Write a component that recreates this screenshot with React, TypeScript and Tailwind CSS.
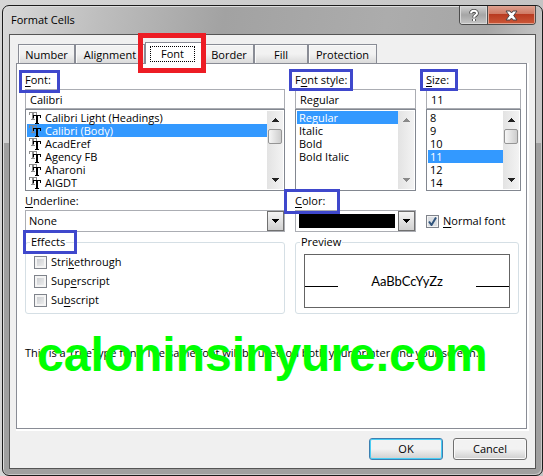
import type { ReactNode } from 'react';

const fonts = ['Calibri Light (Headings)', 'Calibri (Body)', 'AcadEref', 'Agency FB', 'Aharoni', 'AIGDT'];
const styles = ['Regular', 'Italic', 'Bold', 'Bold Italic'];
const sizes = ['8', '9', '10', '11', '12', '14'];

const tabs = [
  { name: 'Number', width: 'w-[57px]' },
  { name: 'Alignment', width: 'w-[70px]' },
  { name: 'Font', width: 'w-[59px]' },
  { name: 'Border', width: 'w-[50px]' },
  { name: 'Fill', width: 'w-[54px]' },
  { name: 'Protection', width: 'w-[69px]' },
];

const effects = [
  { id: 'strike', before: 'Stri', key: 'k', after: 'ethrough' },
  { id: 'super', before: 'Sup', key: 'e', after: 'rscript' },
  { id: 'sub', before: 'Su', key: 'b', after: 'script' },
];

function Mark({ className }: { className: string }) {
  return <span aria-hidden="true" className={`pointer-events-none absolute z-10 border-[3px] border-[#3f48cc] ${className}`} />;
}

function Key({ children }: { children: ReactNode }) {
  return <span className="underline underline-offset-2">{children}</span>;
}

function TrueTypeIcon({ selected }: { selected: boolean }) {
  return (
    <svg width="12" height="12" viewBox="0 0 12 12" shapeRendering="crispEdges" className="shrink-0">
      <path
        d="M0 0h8v3h-1v-2h-2v6h1v1h-4v-1h1v-6h-2v2h-1z"
        fill={selected ? '#7d8796' : '#8c8c8c'}
      />
      <path d="M4 3h8v3h-1v-2h-2v7h1v1h-4v-1h1v-7h-2v2h-1z" fill="#000" />
    </svg>
  );
}

function Arrow({ up, color }: { up?: boolean; color: string }) {
  return (
    <svg width="7" height="4" viewBox="0 0 7 4" shapeRendering="crispEdges">
      <path d={up ? 'M3 0h1v1h1v1h1v1h1v1H0V3h1V2h1V1h1z' : 'M0 0h7v1H6v1H5v1H4v1H3V3H2V2H1V1H0z'} fill={color} />
    </svg>
  );
}

function ScrollBar({ disabled }: { disabled?: boolean }) {
  const color = disabled ? '#8a8a8a' : '#222222';
  return (
    <div className="flex w-4 shrink-0 flex-col items-center bg-gradient-to-r from-[#e3e3e3] to-[#f3f3f3] py-[7px]">
      <Arrow up color={color} />
      {!disabled && (
        <div className="mt-[7px] h-[15px] w-[14px] rounded-[2px] border border-[#959595] bg-gradient-to-r from-[#f6f6f6] to-[#cdcdcd]" />
      )}
      <div className="grow" />
      <Arrow color={color} />
    </div>
  );
}

interface ListProps {
  label: string;
  items: string[];
  selected: string;
  icons?: boolean;
  disabled?: boolean;
}

function List({ label, items, selected, icons, disabled }: ListProps) {
  return (
    <div className="flex h-[82px] border border-[#828790] bg-white p-px">
      <ul role="listbox" aria-label={label} className="min-w-0 grow">
        {items.map((item) => (
          <li
            key={item}
            role="option"
            aria-selected={item === selected}
            className={`flex h-[13px] items-center gap-1 whitespace-nowrap px-[2px] leading-[13px] ${
              item === selected ? 'bg-[#3399ff] text-white' : ''
            }`}
          >
            {icons && <TrueTypeIcon selected={item === selected} />}
            {item}
          </li>
        ))}
      </ul>
      <ScrollBar disabled={disabled} />
    </div>
  );
}

function DropButton() {
  return (
    <span className="pointer-events-none flex w-[17px] shrink-0 items-center justify-center border border-[#707070] bg-gradient-to-b from-[#f4f4f4] to-[#d0d0d0]">
      <Arrow color="#000000" />
    </span>
  );
}

export default function App() {
  const field = 'block h-5 w-full border border-[#abadb3] bg-white px-1 outline-none';
  const label = 'relative block h-[17px]';

  return (
    <div className="bg-[linear-gradient(90deg,#d6d6d6,#c4c4c4)] pl-[2px] pt-[5px] font-['Open_Sans','Noto_Sans',sans-serif] text-[11px] leading-4 text-black">
      <div className="rounded-[7px] border border-[#1c1c1c] bg-[linear-gradient(180deg,transparent_137px,#a0a0a0_137px),linear-gradient(100deg,#d8d8d8_0px,#bdbdbd_100px,#a2a2a2_220px,#acacac_380px,#a6a6a6_480px,#c6c6c6_540px)] px-[6px] pb-[6px] shadow-[inset_1px_1px_0_#dddddd,inset_-1px_-1px_0_#c8c8c8]">
        <header className="flex h-7 items-start justify-between pl-[2px]">
          <h1 className="pt-[6px] leading-4">Format Cells</h1>
          <div className="flex h-[19px] overflow-hidden rounded-b-[4px] border border-t-0 border-[#4d4d4d]">
            <button aria-label="Help" className="flex w-7 items-center justify-center border-r border-[#4d4d4d] bg-gradient-to-b from-[#d2d2d2] via-[#a5a5a5] to-[#c5c5c5] shadow-[inset_0_0_0_1px_#d9d9d9]">
              <svg width="10" height="13" viewBox="0 0 10 13" fill="none">
                <path d="M2 4.5C2 1 8 1 8 4.2C8 6.2 5 6.2 5 8.6M5 10v2" stroke="#444" strokeWidth="3.6" />
                <path d="M2 4.3C2 1 8 1 8 4.2C8 6.2 5 6.2 5 8.4M5 10v2" stroke="#fff" strokeWidth="2" />
              </svg>
            </button>
            <button aria-label="Close" className="flex w-[47px] items-center justify-center bg-[linear-gradient(#dda08f_0%,#cf7963_45%,#b83a20_46%,#cc5838_100%)] shadow-[inset_0_0_0_1px_#e0a18e]">
              <svg width="13" height="11" viewBox="0 0 13 11">
                <path d="M1 1h4l1.500 2L8 1h4L8.700 5.500L12 10H8L6.500 8L5 10H1l3.300-4.500z" fill="#fff" stroke="#4a4446" />
              </svg>
            </button>
          </div>
        </header>

        <main className="border border-[#555555] bg-[#f0f0f0] pb-2 pl-[6px] pr-2 pt-[7px]">
          <div role="tablist" className="flex h-[21px] items-end pl-[2px]">
            {tabs.map(({ name, width }) =>
              name === 'Font' ? (
                <button key={name} role="tab" aria-selected="true" className={`relative z-10 -mb-px flex h-[22px] items-center justify-center border border-b-0 border-[#898c95] bg-white pb-[2px] pl-1 pr-2 pt-[3px] ${width}`}>
                  <span className="flex h-4 w-full items-center justify-center border border-dotted border-black">{name}</span>
                  <span aria-hidden="true" className="pointer-events-none absolute -left-[8px] -right-[3px] -top-[10px] h-10 border-[5px] border-[#ed1c24]" />
                </button>
              ) : (
                <button key={name} role="tab" aria-selected="false" className={`flex h-[19px] items-center justify-center border border-b-0 border-[#898c95] bg-gradient-to-b from-[#f2f2f2] from-50% to-[#dadada] pt-[2px] shadow-[inset_1px_1px_0_#fafafa] ${width}`}>
                  {name}
                </button>
              ),
            )}
          </div>

          <section className="relative flex h-[366px] flex-col border border-[#898c95] bg-white pl-2 pr-[5px] pt-2 shadow-[1px_1px_0_1px_#ffffff]">
            <div className="grid grid-cols-[260fr_121fr_95fr] gap-x-[10px]">
              <div>
                <label htmlFor="font" className={label}>
                  <Mark className="-left-[6px] -top-[2px] h-[23px] w-[41px]" />
                  <Key>F</Key>ont:
                </label>
                <input id="font" defaultValue="Calibri" className={field} />
                <List label="Fonts" items={fonts} selected="Calibri (Body)" icons />
              </div>
              <div>
                <label htmlFor="style" className={label}>
                  <Mark className="-left-[6px] -top-[3px] h-[22px] w-16" />
                  F<Key>o</Key>nt style:
                </label>
                <input id="style" defaultValue="Regular" className={field} />
                <List label="Font styles" items={styles} selected="Regular" disabled />
              </div>
              <div>
                <label htmlFor="size" className={label}>
                  <Mark className="-left-[6px] -top-[3px] h-[22px] w-[38px]" />
                  <Key>S</Key>ize:
                </label>
                <input id="size" defaultValue="11" className={field} />
                <List label="Sizes" items={sizes} selected="11" />
              </div>

              <div className="pt-[2px]">
                <label htmlFor="underline" className={label}>
                  <Key>U</Key>nderline:
                </label>
                <div className="flex h-[22px] border border-[#abadb3]">
                  <select id="underline" className="min-w-0 grow appearance-none px-[3px] outline-none">
                    <option>None</option>
                  </select>
                  <DropButton />
                </div>
              </div>
              <div className="pt-[2px]">
                <label htmlFor="color" className={label}>
                  <Mark className="-left-[11px] -top-[4px] h-[25px] w-14" />
                  <Key>C</Key>olor:
                </label>
                <div className="flex h-[22px] border border-[#abadb3]">
                  <button id="color" className="m-[3px] grow bg-black" />
                  <DropButton />
                </div>
              </div>
              <label className="flex items-center gap-1 self-end whitespace-nowrap pb-[3px]">
                <span className="relative flex">
                  <input type="checkbox" defaultChecked className="size-[13px] appearance-none border border-[#7f838b] bg-[#dcdfe3] shadow-[inset_0_0_0_1px_#f4f4f4]" />
                  <svg width="9" height="9" viewBox="0 0 9 9" className="pointer-events-none absolute left-[2px] top-[2px]">
                    <path d="M1 4.500L3.500 8L8 0.500" fill="none" stroke="#31547c" strokeWidth="2" />
                  </svg>
                </span>
                <span><Key>N</Key>ormal font</span>
              </label>
            </div>

            <div className="mt-[2px] grid grid-cols-[260fr_224fr] gap-x-[10px] pr-[2px]">
              <fieldset className="relative h-20 rounded-[3px] border border-[#d5dfe5] px-2">
                <legend className="relative ml-[-4px] px-px">
                  <Mark className="-left-[7px] -top-1 h-6 w-[54px]" />
                  Effects
                </legend>
                <div className="flex flex-col gap-[3px] pt-1">
                  {effects.map(({ id, before, key, after }) => (
                    <label key={id} className="flex h-4 items-center gap-1">
                      <input type="checkbox" className="size-[13px] appearance-none border border-[#7f838b] bg-gradient-to-br from-[#c4c7cb] to-[#f4f4f4] shadow-[inset_0_0_0_2px_#f4f4f4]" />
                      <span>{before}<Key>{key}</Key>{after}</span>
                    </label>
                  ))}
                </div>
              </fieldset>
              <fieldset className="h-20 rounded-[3px] border border-[#d5dfe5] px-2">
                <legend className="ml-[-4px] px-px">Preview</legend>
                <div className="mt-1 flex h-[54px] items-center justify-between border border-[#646464] font-['Lato','Open_Sans',sans-serif] text-[13px]">
                  <span className="mt-[10px] h-px w-[33px] bg-black" />
                  <span>AaBbCcYyZz</span>
                  <span className="mt-[10px] h-px w-[33px] bg-black" />
                </div>
              </fieldset>
            </div>

            <p className="mt-[31px] whitespace-nowrap">
              This is a TrueType font. The same font will be used on both your printer and your screen.
            </p>
            <div className="absolute left-[20px] top-[263px] whitespace-nowrap font-['Liberation_Sans',sans-serif] text-[48px] font-bold leading-[56px] text-[#00ff00]">
              caloninsinyure.com
            </div>
          </section>

          <div className="flex justify-end gap-[10px] pt-[9px]">
            <button className="h-[22px] w-[74px] rounded-[3px] border border-[#3c7fb1] bg-gradient-to-b from-[#f2f2f2] from-50% to-[#cfcfcf] shadow-[inset_0_0_0_1px_#48cdf4]">OK</button>
            <button className="h-[22px] w-[74px] rounded-[3px] border border-[#707070] bg-gradient-to-b from-[#f2f2f2] from-50% to-[#cfcfcf] shadow-[inset_0_0_0_1px_#fafafa]">Cancel</button>
          </div>
        </main>
      </div>
    </div>
  );
}
